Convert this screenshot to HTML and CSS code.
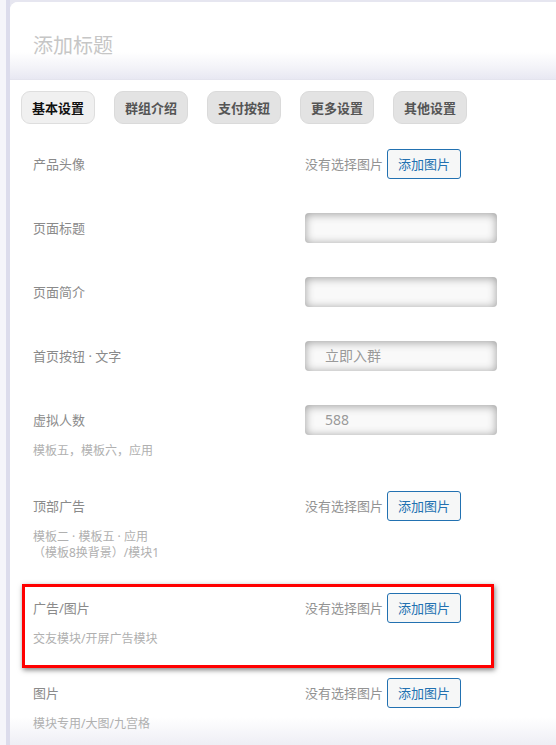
FILE: index.html
```html
<!DOCTYPE html>
<html lang="zh-CN">
<head>
<meta charset="utf-8">
<title>添加标题</title>
<link rel="stylesheet" href="styles.css">
</head>
<body>
<div class="frame">
  <div class="card">
    <div class="header">
      <div class="title">添加标题</div>
    </div>
    <div class="content">
      <div class="tabs">
        <span class="tab active">基本设置</span>
        <span class="tab">群组介绍</span>
        <span class="tab">支付按钮</span>
        <span class="tab">更多设置</span>
        <span class="tab">其他设置</span>
      </div>

      <div class="row">
        <div class="line">
          <div class="label">产品头像</div>
          <div class="control"><span class="none">没有选择图片</span><span class="btn">添加图片</span></div>
        </div>
      </div>

      <div class="row">
        <div class="line">
          <div class="label">页面标题</div>
          <div class="control"><span class="input"></span></div>
        </div>
      </div>

      <div class="row">
        <div class="line">
          <div class="label">页面简介</div>
          <div class="control"><span class="input"></span></div>
        </div>
      </div>

      <div class="row">
        <div class="line">
          <div class="label">首页按钮 · 文字</div>
          <div class="control"><span class="input"><span class="ph">立即入群</span></span></div>
        </div>
      </div>

      <div class="row">
        <div class="line">
          <div class="label">虚拟人数</div>
          <div class="control"><span class="input"><span class="ph">588</span></span></div>
        </div>
        <div class="sub">模板五，模板六，应用</div>
      </div>

      <div class="row">
        <div class="line">
          <div class="label">顶部广告</div>
          <div class="control"><span class="none">没有选择图片</span><span class="btn">添加图片</span></div>
        </div>
        <div class="sub">模板二 · 模板五 · 应用<br>（模板8换背景）/模块1</div>
      </div>

      <div class="highlight">
        <div class="line">
          <div class="label">广告/图片</div>
          <div class="control"><span class="none">没有选择图片</span><span class="btn">添加图片</span></div>
        </div>
        <div class="sub">交友模块/开屏广告模块</div>
      </div>

      <div class="row">
        <div class="line">
          <div class="label">图片</div>
          <div class="control"><span class="none">没有选择图片</span><span class="btn">添加图片</span></div>
        </div>
        <div class="sub">模块专用/大图/九宫格</div>
      </div>
    </div>
  </div>
</div>
</body>
</html>
```

FILE: styles.css
```css
html, body {
  margin: 0;
  padding: 0;
}

body {
  background: #f5f5fa;
  font-family: "Noto Sans", "Noto Sans CJK SC", sans-serif;
  font-size: 13px;
  color: #777;
}

.frame {
  margin-left: 6px;
  border-left: 4px solid #dcdcec;
  padding-top: 2px;
  background: #e6e6f0;
  height: 743px;
  overflow: hidden;
}

.card {
  background: #fff;
  border-top-left-radius: 8px;
  overflow: hidden;
}

.header {
  height: 78px;
  box-sizing: border-box;
  padding: 30px 0 0 23px;
  background: linear-gradient(to bottom, #ffffff 0%, #ffffff 65%, #f3f3f8 85%, #e8e8f2 100%);
  border-bottom: 1px solid #e4e4ee;
}

.title {
  font-size: 20px;
  line-height: 28px;
  color: #c6c6c6;
}

.content {
  padding: 11px 0 0 11px;
  height: 667px;
  box-sizing: border-box;
  background: linear-gradient(to bottom, #ffffff 0, #ffffff calc(100% - 30px), #ededf4 100%);
}

.tabs {
  display: flex;
  gap: 19px;
  height: 33px;
  margin-bottom: 8px;
}

.tab {
  display: flex;
  align-items: center;
  box-sizing: border-box;
  height: 33px;
  padding: 0 10px;
  border: 1px solid #dadada;
  border-radius: 9px;
  background: #e3e3e3;
  color: #555;
  font-weight: bold;
  font-size: 13px;
  line-height: 16px;
}

.tab.active {
  background: #f0f0f0;
  color: #111;
  border-color: #dedede;
}

.row {
  padding: 15px 0 15px 12px;
}

.line {
  display: grid;
  grid-template-columns: 272px auto;
  align-items: center;
  height: 34px;
}

.label {
  font-size: 13px;
  line-height: 16px;
  color: #8a8a8a;
}

.control {
  display: flex;
  align-items: center;
  gap: 4px;
}

.none {
  font-size: 13px;
  line-height: 16px;
  color: #939393;
}

.btn {
  display: inline-flex;
  align-items: center;
  box-sizing: border-box;
  height: 30px;
  padding: 0 10px;
  border: 1px solid #2271b1;
  border-radius: 3px;
  background: #f6f7f7;
  color: #2271b1;
  font-size: 13px;
  line-height: 16px;
}

.input {
  display: flex;
  align-items: center;
  box-sizing: border-box;
  width: 192px;
  height: 30px;
  padding-left: 20px;
  border-radius: 4px;
  background: #f9f9f9;
  box-shadow: inset 0 1px 10px rgba(0, 0, 0, 0.38);
}

.ph {
  font-size: 14px;
  line-height: 18px;
  color: #9a9a9a;
}

.sub {
  margin-top: 6px;
  font-size: 12px;
  line-height: 16px;
  color: #b0b0b0;
}

.highlight {
  box-sizing: border-box;
  width: 472px;
  margin: 8px 0 -7px 1px;
  padding: 4px 0 18px 8px;
  border: 3px solid #ff0000;
  box-shadow: 1px 2px 5px rgba(0, 0, 0, 0.5);
  position: relative;
  z-index: 1;
}
```
